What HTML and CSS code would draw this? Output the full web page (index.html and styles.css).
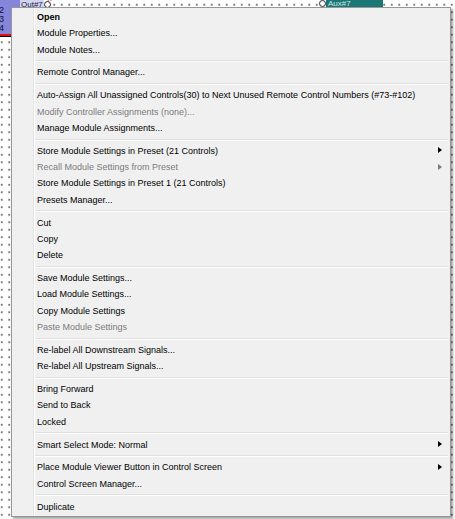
FILE: index.html
```html
<!DOCTYPE html>
<html>
<head>
<meta charset="utf-8">
<link rel="stylesheet" href="styles.css">
</head>
<body>
<div class="canvas">
  <div class="module module-input">
    <span class="pin-num">2</span>
    <span class="pin-num">3</span>
    <span class="pin-num">4</span>
  </div>
  <div class="module-rule"></div>
  <span class="port-label port-out">Out#7</span>
  <span class="port-dot port-dot-out"></span>
  <span class="port-x">×</span>
  <span class="port-dot port-dot-aux"></span>
  <div class="module module-aux"><span class="port-label port-aux">Aux#7</span></div>

  <div class="menu">
    <div class="item bold">Open</div>
    <div class="item">Module Properties...</div>
    <div class="item">Module Notes...</div>
    <div class="sep"></div>
    <div class="item">Remote Control Manager...</div>
    <div class="sep"></div>
    <div class="item">Auto-Assign All Unassigned Controls(30) to Next Unused Remote Control Numbers (#73-#102)</div>
    <div class="item disabled">Modify Controller Assignments (none)...</div>
    <div class="item">Manage Module Assignments...</div>
    <div class="sep"></div>
    <div class="item sub">Store Module Settings in Preset (21 Controls)</div>
    <div class="item sub disabled">Recall Module Settings from Preset</div>
    <div class="item">Store Module Settings in Preset 1 (21 Controls)</div>
    <div class="item">Presets Manager...</div>
    <div class="sep"></div>
    <div class="item">Cut</div>
    <div class="item">Copy</div>
    <div class="item">Delete</div>
    <div class="sep"></div>
    <div class="item">Save Module Settings...</div>
    <div class="item">Load Module Settings...</div>
    <div class="item">Copy Module Settings</div>
    <div class="item disabled">Paste Module Settings</div>
    <div class="sep"></div>
    <div class="item">Re-label All Downstream Signals...</div>
    <div class="item">Re-label All Upstream Signals...</div>
    <div class="sep"></div>
    <div class="item">Bring Forward</div>
    <div class="item">Send to Back</div>
    <div class="item">Locked</div>
    <div class="sep"></div>
    <div class="item sub">Smart Select Mode: Normal</div>
    <div class="sep"></div>
    <div class="item sub">Place Module Viewer Button in Control Screen</div>
    <div class="item">Control Screen Manager...</div>
    <div class="sep"></div>
    <div class="item">Duplicate</div>
  </div>
</div>
</body>
</html>
```
FILE: styles.css
```css
html, body {
  margin: 0;
  padding: 0;
}

body {
  width: 455px;
  height: 519px;
  overflow: hidden;
  font-family: "Liberation Sans", Arial, sans-serif;
}

/* design canvas with its dotted snap grid */
.canvas {
  position: relative;
  width: 455px;
  height: 519px;
  background-color: #ffffff;
  background-image: radial-gradient(circle, #3a3a3a 0.55px, transparent 0.9px);
  background-size: 7.5px 7.5px;
  background-position: -2px 1px;
}

.module {
  position: absolute;
}

.module-input {
  left: 0;
  top: 0;
  width: 20px;
  height: 34px;
  background: #8585dc;
  display: flex;
  flex-direction: column;
  padding-top: 6px;
  box-sizing: border-box;
}

.pin-num {
  font-size: 9px;
  line-height: 9px;
  color: #101030;
  margin-left: -1px;
}

.module-rule {
  position: absolute;
  left: 0;
  top: 34px;
  width: 20px;
  height: 2px;
  background: #e01010;
  border-bottom: 1px solid #000;
}

.port-label {
  position: absolute;
  font-size: 8px;
  line-height: 9px;
}

.port-out {
  left: 20px;
  top: 0;
  color: #202040;
  background: #d4d4f2;
  padding: 0 1px;
}

.port-dot {
  position: absolute;
  width: 5px;
  height: 5px;
  border: 1px solid #222;
  border-radius: 50%;
  background: #fff;
}

.port-dot-out { left: 44px; top: 1px; }
.port-dot-aux { left: 319px; top: 0; }

.port-x {
  position: absolute;
  left: 47px;
  top: -6px;
  font-size: 9px;
  color: #d00000;
}

.module-aux {
  left: 326px;
  top: 0;
  width: 57px;
  height: 7px;
  background: #1b7676;
  overflow: hidden;
}

.port-aux {
  left: 2px;
  top: -1px;
  color: #c8e6e6;
}

/* context menu floating above the canvas */
.menu {
  position: absolute;
  left: 11px;
  top: 7px;
  width: 438px;
  padding: 1px 0;
  background-color: #f0f0f0;
  background-image: linear-gradient(to right, transparent 21px, #e2e3e3 21px, #e2e3e3 22px, #ffffff 22px, #ffffff 23px, transparent 23px);
  border: 1px solid #979797;
  box-shadow: 2px 2px 2px rgba(0, 0, 0, 0.35);
}

.item {
  position: relative;
  height: 16.33px;
  line-height: 16.33px;
  padding-left: 25px;
  font-size: 9px;
  color: #000;
  white-space: nowrap;
}

.item.bold {
  font-weight: bold;
}

.item.disabled {
  color: #7b7b7b;
}

/* submenu arrow */
.item.sub::after {
  content: "";
  position: absolute;
  right: 8px;
  top: 50%;
  margin-top: -3.5px;
  border-left: 4px solid #000;
  border-top: 3.5px solid transparent;
  border-bottom: 3.5px solid transparent;
}

.item.sub.disabled::after {
  border-left-color: #7b7b7b;
}

.sep {
  height: 0;
  margin: 2.25px 2px 2.25px 23px;
  border-top: 1px solid #e0e0e0;
  border-bottom: 1px solid #ffffff;
}
```
